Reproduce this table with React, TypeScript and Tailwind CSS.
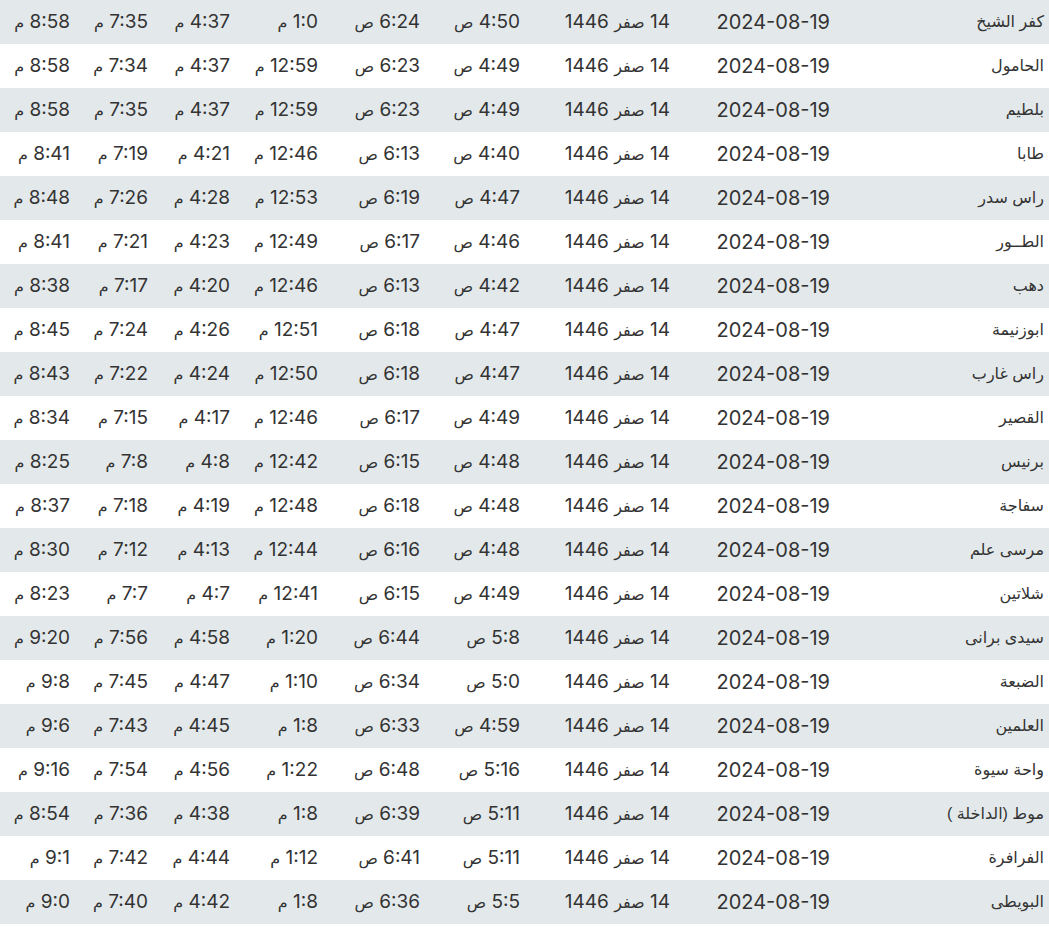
const rows: string[][] = [
  ['كفر الشيخ', '4:50 ص', '6:24 ص', '1:0 م', '4:37 م', '7:35 م', '8:58 م'],
  ['الحامول', '4:49 ص', '6:23 ص', '12:59 م', '4:37 م', '7:34 م', '8:58 م'],
  ['بلطيم', '4:49 ص', '6:23 ص', '12:59 م', '4:37 م', '7:35 م', '8:58 م'],
  ['طابا', '4:40 ص', '6:13 ص', '12:46 م', '4:21 م', '7:19 م', '8:41 م'],
  ['راس سدر', '4:47 ص', '6:19 ص', '12:53 م', '4:28 م', '7:26 م', '8:48 م'],
  ['الطــور', '4:46 ص', '6:17 ص', '12:49 م', '4:23 م', '7:21 م', '8:41 م'],
  ['دهب', '4:42 ص', '6:13 ص', '12:46 م', '4:20 م', '7:17 م', '8:38 م'],
  ['ابوزنيمة', '4:47 ص', '6:18 ص', '12:51 م', '4:26 م', '7:24 م', '8:45 م'],
  ['راس غارب', '4:47 ص', '6:18 ص', '12:50 م', '4:24 م', '7:22 م', '8:43 م'],
  ['القصير', '4:49 ص', '6:17 ص', '12:46 م', '4:17 م', '7:15 م', '8:34 م'],
  ['برنيس', '4:48 ص', '6:15 ص', '12:42 م', '4:8 م', '7:8 م', '8:25 م'],
  ['سفاجة', '4:48 ص', '6:18 ص', '12:48 م', '4:19 م', '7:18 م', '8:37 م'],
  ['مرسى علم', '4:48 ص', '6:16 ص', '12:44 م', '4:13 م', '7:12 م', '8:30 م'],
  ['شلاتين', '4:49 ص', '6:15 ص', '12:41 م', '4:7 م', '7:7 م', '8:23 م'],
  ['سيدى برانى', '5:8 ص', '6:44 ص', '1:20 م', '4:58 م', '7:56 م', '9:20 م'],
  ['الضبعة', '5:0 ص', '6:34 ص', '1:10 م', '4:47 م', '7:45 م', '9:8 م'],
  ['العلمين', '4:59 ص', '6:33 ص', '1:8 م', '4:45 م', '7:43 م', '9:6 م'],
  ['واحة سيوة', '5:16 ص', '6:48 ص', '1:22 م', '4:56 م', '7:54 م', '9:16 م'],
  ['موط (الداخلة )', '5:11 ص', '6:39 ص', '1:8 م', '4:38 م', '7:36 م', '8:54 م'],
  ['الفرافرة', '5:11 ص', '6:41 ص', '1:12 م', '4:44 م', '7:42 م', '9:1 م'],
  ['البويطى', '5:5 ص', '6:36 ص', '1:8 م', '4:42 م', '7:40 م', '9:0 م'],
];

const cell = "pr-[4px] text-[19px] font-['Inter','Liberation_Sans',sans-serif] whitespace-nowrap";
const arabic = "text-[16px] font-['DejaVu_Sans',sans-serif]";

function Time({ value }: { value: string }) {
  const [num, suffix] = value.split(' ');
  return (
    <div className={cell}>
      {num} <span className={arabic}>{suffix}</span>
    </div>
  );
}

export default function App() {
  return (
    <div dir="rtl" className="w-[1049px] min-h-[927px] bg-white text-[#333]">
      {rows.map((r, i) => (
        <div
          key={i}
          className={`grid grid-cols-[215px_160px_150px_100px_102px_88px_82px_78px_74px] h-[44px] items-center ${
            i % 2 === 0 ? 'bg-[#e3e9eb]' : 'bg-white'
          }`}
        >
          <div className="pr-[5px] text-[16px] font-['Liberation_Sans','DejaVu_Sans',sans-serif] whitespace-nowrap">
            {r[0]}
          </div>
          <div className={`${cell} text-[20px]`}>2024-08-19</div>
          <div className={cell}>
            14 <span className={arabic}>صفر</span> 1446
          </div>
          {r.slice(1).map((t, j) => (
            <Time key={j} value={t} />
          ))}
        </div>
      ))}
    </div>
  );
}
